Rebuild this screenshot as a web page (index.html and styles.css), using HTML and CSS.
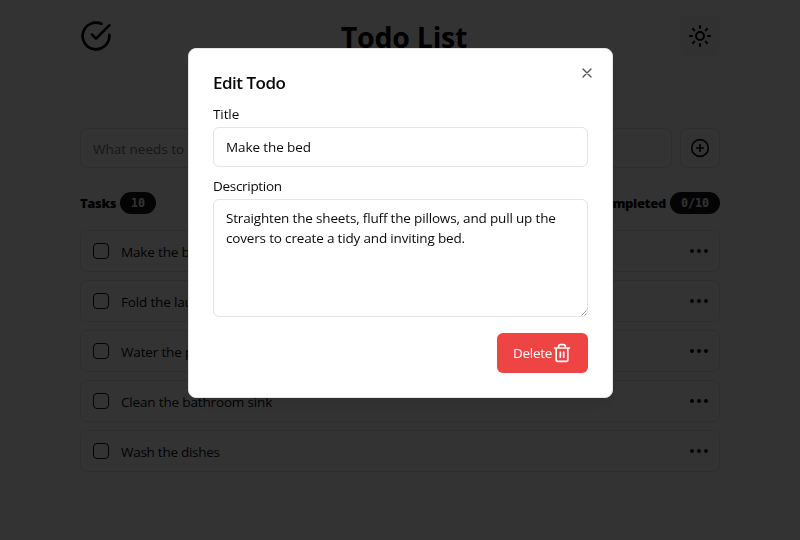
FILE: index.html
```html
<!DOCTYPE html>
<html lang="en">
<head>
<meta charset="utf-8">
<title>Todo List</title>
<link rel="stylesheet" href="styles.css">
</head>
<body>
<main class="app">
  <header class="top">
    <svg class="icon logo" viewBox="0 0 24 24"><path d="M22 11.08V12a10 10 0 1 1-5.93-9.14"/><path d="m9 11 3 3L22 4"/></svg>
    <h1 class="heading">Todo List</h1>
    <button class="theme"><svg class="icon i24" viewBox="0 0 24 24"><circle cx="12" cy="12" r="4"/><path d="M12 2v2M12 20v2M4.93 4.93l1.41 1.41M17.66 17.66l1.41 1.41M2 12h2M20 12h2M6.34 17.66l-1.41 1.41M19.07 4.93l-1.41 1.41"/></svg></button>
  </header>
  <div class="add">
    <div class="new-task">What needs to be done?</div>
    <button class="plus"><svg class="icon i20" viewBox="0 0 24 24"><circle cx="12" cy="12" r="10"/><path d="M8 12h8M12 8v8"/></svg></button>
  </div>
  <div class="stats">
    <div class="stat"><span class="stat-name">Tasks</span><span class="badge">10</span></div>
    <div class="stat"><span class="stat-name">Completed</span><span class="badge">0/10</span></div>
  </div>
  <ul class="list">
    <li class="task"><span class="check"></span><span class="name">Make the bed</span><svg class="icon i24" viewBox="0 0 24 24"><circle cx="5" cy="12" r="1"/><circle cx="12" cy="12" r="1"/><circle cx="19" cy="12" r="1"/></svg></li>
    <li class="task"><span class="check"></span><span class="name">Fold the laundry</span><svg class="icon i24" viewBox="0 0 24 24"><circle cx="5" cy="12" r="1"/><circle cx="12" cy="12" r="1"/><circle cx="19" cy="12" r="1"/></svg></li>
    <li class="task"><span class="check"></span><span class="name">Water the plants</span><svg class="icon i24" viewBox="0 0 24 24"><circle cx="5" cy="12" r="1"/><circle cx="12" cy="12" r="1"/><circle cx="19" cy="12" r="1"/></svg></li>
    <li class="task"><span class="check"></span><span class="name">Clean the bathroom sink</span><svg class="icon i24" viewBox="0 0 24 24"><circle cx="5" cy="12" r="1"/><circle cx="12" cy="12" r="1"/><circle cx="19" cy="12" r="1"/></svg></li>
    <li class="task"><span class="check"></span><span class="name tight">Wash the dishes</span><svg class="icon i24" viewBox="0 0 24 24"><circle cx="5" cy="12" r="1"/><circle cx="12" cy="12" r="1"/><circle cx="19" cy="12" r="1"/></svg></li>
  </ul>
</main>
<div class="overlay">
  <section class="dialog" role="dialog">
    <button class="close"><svg class="icon i16" viewBox="0 0 24 24"><path d="M18 6 6 18M6 6l12 12"/></svg></button>
    <h2 class="dialog-title">Edit Todo</h2>
    <label class="label first" for="title">Title</label>
    <input class="field" id="title" value="Make the bed">
    <label class="label desc" for="desc">Description</label>
    <div class="area-wrap">
      <textarea class="field area" id="desc" spellcheck="false">Straighten the sheets, fluff the pillows, and pull up the
covers to create a tidy and inviting bed.</textarea>
      <svg class="grip" viewBox="0 0 6 6"><path d="M.5 5.5l5-5M3.5 5.5l2-2"/></svg>
    </div>
    <button class="delete"><span>Delete</span><svg class="icon i20" viewBox="0 0 24 24"><path d="M3 6h18M19 6v14a2 2 0 0 1-2 2H7a2 2 0 0 1-2-2V6M8 6V4a2 2 0 0 1 2-2h4a2 2 0 0 1 2 2v2M10 11v6M14 11v6"/></svg></button>
  </section>
</div>
</body>
</html>
```
FILE: styles.css
```css
* { box-sizing: border-box; }
body {
  margin: 0;
  height: 540px;
  overflow: hidden;
  background: #fff;
  color: #09090b;
  font: 13.5px/20px "Open Sans", "Noto Sans", sans-serif;
  letter-spacing: -0.16px;
}
h1, h2, ul { margin: 0; padding: 0; }
button { margin: 0; padding: 0; font: inherit; letter-spacing: inherit; color: inherit; background: none; border: 0; }
.icon { display: block; flex: none; width: 24px; height: 24px; fill: none; stroke: currentColor; stroke-width: 2; stroke-linecap: round; stroke-linejoin: round; }
.i20 { width: 20px; height: 20px; }
.i16 { width: 16px; height: 16px; }
.logo { width: 32px; height: 32px; }
.app { width: 640px; margin: 0 auto; padding-top: 16px; }
.top { display: flex; align-items: center; justify-content: space-between; height: 40px; color: #000; }
.heading { font-size: 28.5px; line-height: 36px; font-weight: 700; letter-spacing: -0.25px; padding: 2px 0 0 16px; }
.theme, .plus { display: flex; align-items: center; justify-content: center; width: 40px; height: 40px; border-radius: 6px; }
.theme { background: #f4f4f5; }
.plus { border: 1px solid #e4e4e7; }
.add { display: flex; gap: 8px; margin-top: 72px; }
.new-task { flex: 1; height: 40px; padding: 10px 12px; border: 1px solid #e4e4e7; border-radius: 6px; color: #71717a; letter-spacing: 0; }
.stats { display: flex; justify-content: space-between; margin-top: 24px; height: 22px; }
.stat { display: flex; align-items: center; gap: 4px; }
.stat-name { font-size: 13px; font-weight: 800; letter-spacing: -0.35px; }
.badge { height: 22px; padding: 0 11px; border-radius: 11px; background: #18181b; color: #fafafa; font: 700 11.67px/22px "DejaVu Sans Mono", monospace; letter-spacing: 0; }
.list { list-style: none; display: flex; flex-direction: column; gap: 8px; margin-top: 16px; }
.task { display: flex; align-items: center; height: 42px; padding: 0 8px 0 12px; border: 1px solid #e4e4e7; border-radius: 6px; }
.check { width: 16px; height: 16px; border: 1px solid #18181b; border-radius: 4px; }
.name { flex: 1; margin-left: 12px; padding-top: 2px; }
.tight { letter-spacing: -0.27px; }
.overlay { position: fixed; inset: 0; display: flex; align-items: flex-start; justify-content: center; padding: 48px 0 0 1px; background: rgba(0, 0, 0, .8); }
.dialog { position: relative; width: 425px; height: 350px; padding: 24px; display: flex; flex-direction: column; background: #fff; border: 1px solid #e4e4e7; border-radius: 8px; box-shadow: 0 10px 15px -3px rgba(0, 0, 0, .1), 0 4px 6px -4px rgba(0, 0, 0, .1); }
.close { position: absolute; top: 15.5px; right: 16.7px; opacity: .7; }
.dialog-title { font-size: 17px; line-height: 19px; height: 18px; font-weight: 600; letter-spacing: -0.5px; }
.label { height: 14px; line-height: 15px; margin-top: 12px; }
.first { margin-top: 16px; letter-spacing: -0.1px; }
.desc { letter-spacing: -0.3px; }
.field { display: block; width: 100%; height: 40px; margin: 6px 0 0; padding: 8px 12px; border: 1px solid #e4e4e7; border-radius: 6px; background: #fff; color: inherit; font: inherit; letter-spacing: -0.1px; outline: 0; }
.area-wrap { position: relative; }
.area { height: 118px; padding-top: 8px; resize: none; white-space: pre; overflow: hidden; letter-spacing: -0.17px; }
.grip { position: absolute; right: 1px; bottom: 1px; width: 6px; height: 6px; fill: none; stroke: #999; stroke-width: 1; }
.delete { display: flex; align-items: center; align-self: flex-end; width: 91px; height: 40px; margin-top: 16px; padding: 0 16px; border-radius: 6px; background: #ef4444; color: #fafafa; }
.delete span { width: 39px; letter-spacing: -0.3px; }
```
